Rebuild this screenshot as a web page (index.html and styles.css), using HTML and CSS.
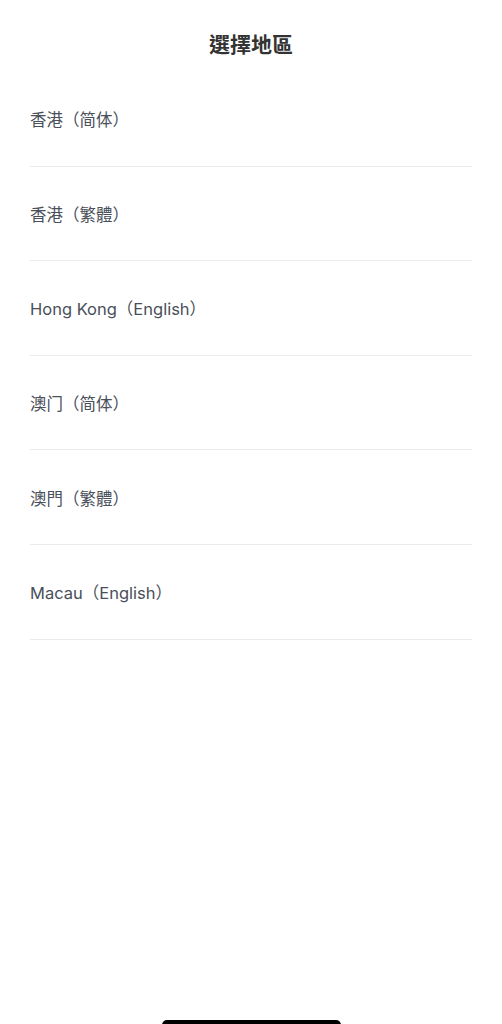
FILE: index.html
```html
<!DOCTYPE html>
<html lang="zh-Hant">
<head>
<meta charset="utf-8">
<meta name="viewport" content="width=device-width, initial-scale=1">
<title>選擇地區</title>
<link rel="stylesheet" href="styles.css">
</head>
<body>
<div class="page">
  <header class="header">
    <h1 class="title">選擇地區</h1>
  </header>
  <ul class="list">
    <li class="row">香港（简体）</li>
    <li class="row">香港（繁體）</li>
    <li class="row">Hong Kong（English）</li>
    <li class="row">澳门（简体）</li>
    <li class="row">澳門（繁體）</li>
    <li class="row">Macau（English）</li>
  </ul>
  <div class="home-indicator"></div>
</div>
</body>
</html>
```
FILE: styles.css
```css
html, body {
  margin: 0;
  padding: 0;
  background: #ffffff;
}
body {
  font-family: "Inter", "Noto Sans CJK TC", "Noto Sans CJK SC", sans-serif;
}
.page {
  position: relative;
  width: 502px;
  height: 1024px;
  overflow: hidden;
  background: #fff;
}
.header {
  height: 72px;
  box-sizing: border-box;
  padding-top: 33px;
  text-align: center;
}
.title {
  margin: 0;
  font-size: 21px;
  line-height: 24px;
  font-weight: 700;
  color: #333333;
}
.list {
  list-style: none;
  margin: 0;
  padding: 0 30px;
}
.row {
  height: 94.6px;
  box-sizing: border-box;
  border-bottom: 1px solid #ebebeb;
  display: flex;
  align-items: center;
  padding-top: 1px;
  font-size: 16.5px;
  color: #4a4f5a;
}
.home-indicator {
  position: absolute;
  left: 162px;
  top: 1020px;
  width: 179px;
  height: 10px;
  border-radius: 5px;
  background: #000;
}
```
